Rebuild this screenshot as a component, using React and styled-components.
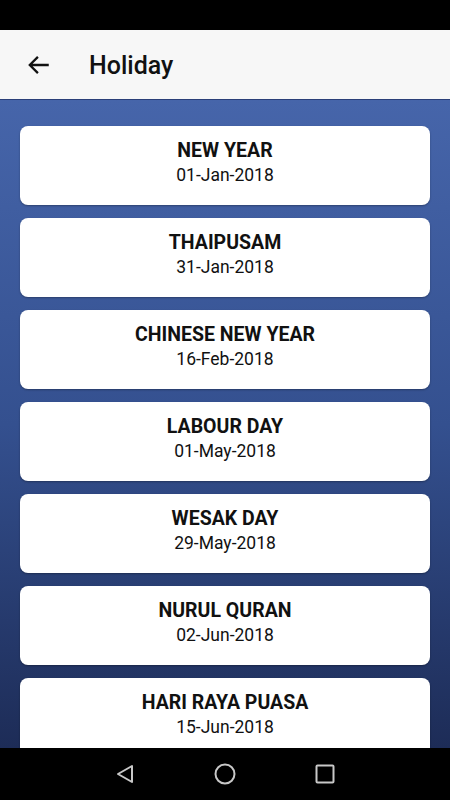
import React from 'react';
import styled, { createGlobalStyle } from 'styled-components';

const holidays = [
  { name: 'NEW YEAR', date: '01-Jan-2018' },
  { name: 'THAIPUSAM', date: '31-Jan-2018' },
  { name: 'CHINESE NEW YEAR', date: '16-Feb-2018' },
  { name: 'LABOUR DAY', date: '01-May-2018' },
  { name: 'WESAK DAY', date: '29-May-2018' },
  { name: 'NURUL QURAN', date: '02-Jun-2018' },
  { name: 'HARI RAYA PUASA', date: '15-Jun-2018' },
];

const GlobalStyle = createGlobalStyle`
  body {
    margin: 0;
    font-family: Roboto, "Liberation Sans", sans-serif;
  }
`;

const Screen = styled.div`
  display: flex;
  flex-direction: column;
  width: 450px;
  height: 800px;
  overflow: hidden;
`;

const StatusBar = styled.div`
  height: 30px;
  background: #000;
  flex-shrink: 0;
`;

const AppBar = styled.div`
  height: 70px;
  background: #f7f7f7;
  display: flex;
  align-items: center;
  padding-left: 26px;
  gap: 37px;
  flex-shrink: 0;
  border-bottom: 1px solid #2a3f78;
  box-sizing: border-box;

  h1 {
    margin: 0 0 0 0;
    font-size: 25px;
    font-weight: 500;
    color: #111;
    padding-top: 2px;
  }
`;

const BackButton = styled.div`
  width: 26px;
  height: 26px;
  display: flex;
  align-items: center;
  justify-content: center;
`;

const Content = styled.div`
  flex: 1;
  overflow: hidden;
  background: linear-gradient(180deg, #4665aa 0%, #34508f 50%, #1d2c57 100%);
  padding: 26px 20px 0;
  display: flex;
  flex-direction: column;
  gap: 13px;
`;

const Card = styled.div`
  flex-shrink: 0;
  height: 79px;
  box-sizing: border-box;
  padding-bottom: 6px;
  background: #fff;
  border-radius: 8px;
  display: flex;
  flex-direction: column;
  align-items: center;
  justify-content: center;
  box-shadow: 0 1px 2px rgba(0, 0, 0, 0.3);
  color: #111;

  h2 {
    margin: 0;
    font-size: 19.5px;
    font-weight: 700;
    line-height: 24px;
  }

  p {
    margin: 0;
    font-size: 17.5px;
    line-height: 24px;
  }
`;

const NavBar = styled.div`
  height: 52px;
  background: #000;
  flex-shrink: 0;
  display: flex;
  justify-content: center;
  align-items: center;
  gap: 70px;
`;

const NavIcon = styled.svg`
  width: 30px;
  height: 30px;
  fill: none;
  stroke: #c8c8c8;
  stroke-width: 2;
`;

export default function App() {
  return (
    <>
      <GlobalStyle />
      <Screen>
        <StatusBar />
        <AppBar>
          <BackButton>
            <svg width="26" height="26" viewBox="0 0 24 24" fill="none" stroke="#111" strokeWidth="2.1">
              <path d="M21 12H3.5M11 4.5L3.5 12l7.5 7.5" />
            </svg>
          </BackButton>
          <h1>Holiday</h1>
        </AppBar>
        <Content>
          {holidays.map((h) => (
            <Card key={h.name}>
              <h2>{h.name}</h2>
              <p>{h.date}</p>
            </Card>
          ))}
        </Content>
        <NavBar>
          <NavIcon viewBox="0 0 30 30">
            <path d="M22 7v16L8 15z" strokeLinejoin="round" />
          </NavIcon>
          <NavIcon viewBox="0 0 30 30">
            <circle cx="15" cy="15" r="9.5" />
          </NavIcon>
          <NavIcon viewBox="0 0 30 30">
            <rect x="6.5" y="6.5" width="17" height="17" rx="1" />
          </NavIcon>
        </NavBar>
      </Screen>
    </>
  );
}
